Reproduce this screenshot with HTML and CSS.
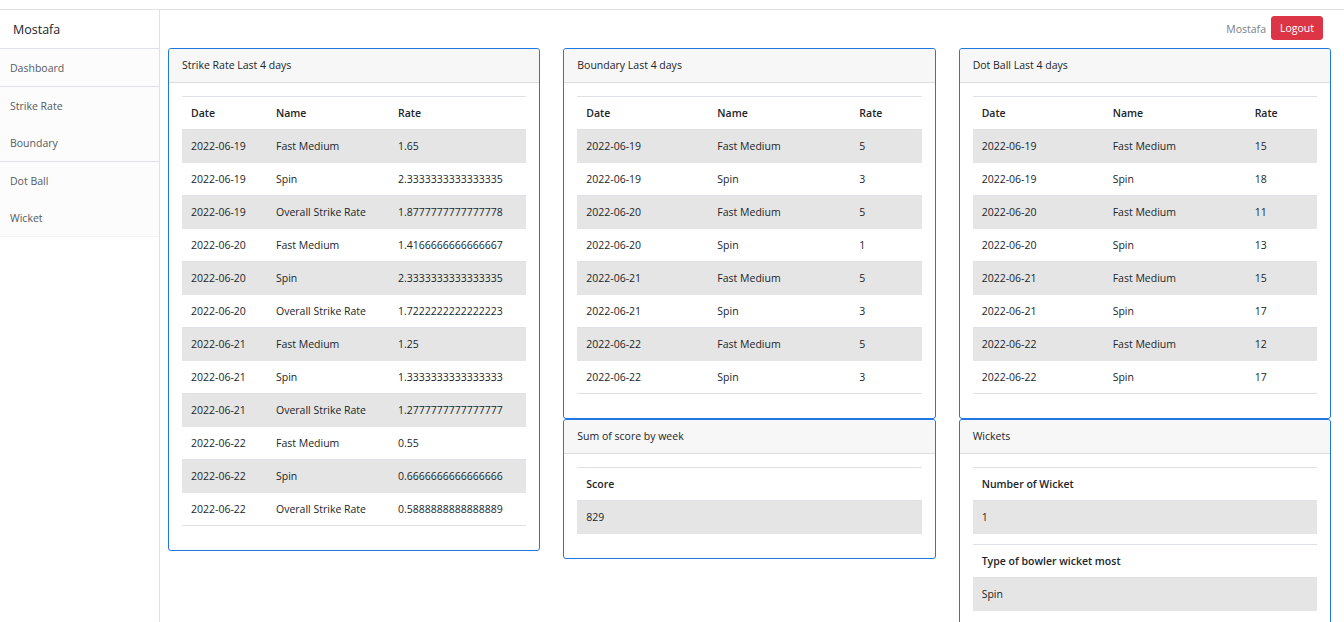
FILE: index.html
```html
<!DOCTYPE html>
<html>
<head>
<meta charset="utf-8">
<link rel="stylesheet" href="styles.css">
</head>
<body>
<div class="page">
  <aside class="sidebar">
    <div class="brand">Mostafa</div>
    <nav class="nav">
      <a class="nav-item sep">Dashboard</a>
      <a class="nav-item">Strike Rate</a>
      <a class="nav-item sep">Boundary</a>
      <a class="nav-item">Dot Ball</a>
      <a class="nav-item sep-faint">Wicket</a>
    </nav>
  </aside>
  <main class="main">
    <header class="topbar">
      <span class="user">Mostafa</span>
      <button class="logout">Logout</button>
    </header>
    <div class="grid">
      <div class="col">
        <section class="card">
          <div class="card-header">Strike Rate Last 4 days</div>
          <div class="card-body">
            <table class="table">
              <colgroup><col class="c1a"><col class="c1b"><col></colgroup>
              <thead><tr><th>Date</th><th>Name</th><th>Rate</th></tr></thead>
              <tbody>
                <tr><td>2022-06-19</td><td>Fast Medium</td><td>1.65</td></tr>
                <tr><td>2022-06-19</td><td>Spin</td><td>2.3333333333333335</td></tr>
                <tr><td>2022-06-19</td><td>Overall Strike Rate</td><td>1.8777777777777778</td></tr>
                <tr><td>2022-06-20</td><td>Fast Medium</td><td>1.4166666666666667</td></tr>
                <tr><td>2022-06-20</td><td>Spin</td><td>2.3333333333333335</td></tr>
                <tr><td>2022-06-20</td><td>Overall Strike Rate</td><td>1.7222222222222223</td></tr>
                <tr><td>2022-06-21</td><td>Fast Medium</td><td>1.25</td></tr>
                <tr><td>2022-06-21</td><td>Spin</td><td>1.3333333333333333</td></tr>
                <tr><td>2022-06-21</td><td>Overall Strike Rate</td><td>1.2777777777777777</td></tr>
                <tr><td>2022-06-22</td><td>Fast Medium</td><td>0.55</td></tr>
                <tr><td>2022-06-22</td><td>Spin</td><td>0.6666666666666666</td></tr>
                <tr><td>2022-06-22</td><td>Overall Strike Rate</td><td>0.5888888888888889</td></tr>
              </tbody>
            </table>
          </div>
        </section>
      </div>
      <div class="col">
        <section class="card">
          <div class="card-header">Boundary Last 4 days</div>
          <div class="card-body">
            <table class="table">
              <colgroup><col class="c2a"><col class="c2b"><col></colgroup>
              <thead><tr><th>Date</th><th>Name</th><th>Rate</th></tr></thead>
              <tbody>
                <tr><td>2022-06-19</td><td>Fast Medium</td><td>5</td></tr>
                <tr><td>2022-06-19</td><td>Spin</td><td>3</td></tr>
                <tr><td>2022-06-20</td><td>Fast Medium</td><td>5</td></tr>
                <tr><td>2022-06-20</td><td>Spin</td><td>1</td></tr>
                <tr><td>2022-06-21</td><td>Fast Medium</td><td>5</td></tr>
                <tr><td>2022-06-21</td><td>Spin</td><td>3</td></tr>
                <tr><td>2022-06-22</td><td>Fast Medium</td><td>5</td></tr>
                <tr><td>2022-06-22</td><td>Spin</td><td>3</td></tr>
              </tbody>
            </table>
          </div>
        </section>
        <section class="card">
          <div class="card-header">Sum of score by week</div>
          <div class="card-body">
            <table class="table">
              <thead><tr><th>Score</th></tr></thead>
              <tbody><tr><td>829</td></tr></tbody>
            </table>
          </div>
        </section>
      </div>
      <div class="col">
        <section class="card">
          <div class="card-header">Dot Ball Last 4 days</div>
          <div class="card-body">
            <table class="table">
              <colgroup><col class="c2a"><col class="c2b"><col></colgroup>
              <thead><tr><th>Date</th><th>Name</th><th>Rate</th></tr></thead>
              <tbody>
                <tr><td>2022-06-19</td><td>Fast Medium</td><td>15</td></tr>
                <tr><td>2022-06-19</td><td>Spin</td><td>18</td></tr>
                <tr><td>2022-06-20</td><td>Fast Medium</td><td>11</td></tr>
                <tr><td>2022-06-20</td><td>Spin</td><td>13</td></tr>
                <tr><td>2022-06-21</td><td>Fast Medium</td><td>15</td></tr>
                <tr><td>2022-06-21</td><td>Spin</td><td>17</td></tr>
                <tr><td>2022-06-22</td><td>Fast Medium</td><td>12</td></tr>
                <tr><td>2022-06-22</td><td>Spin</td><td>17</td></tr>
              </tbody>
            </table>
          </div>
        </section>
        <section class="card">
          <div class="card-header">Wickets</div>
          <div class="card-body">
            <table class="table">
              <thead><tr><th>Number of Wicket</th></tr></thead>
              <tbody><tr><td>1</td></tr></tbody>
            </table>
            <table class="table">
              <thead><tr><th>Type of bowler wicket most</th></tr></thead>
              <tbody><tr><td>Spin</td></tr></tbody>
            </table>
          </div>
        </section>
      </div>
    </div>
  </main>
</div>
</body>
</html>
```
FILE: styles.css
```css
* { box-sizing: border-box; }
html, body { margin: 0; padding: 0; background: #fff; }
body {
  font-family: "Open Sans", "Noto Sans", sans-serif;
  font-size: 10.5px;
  color: #212529;
}
.page {
  margin-top: 9px;
  border-top: 1px solid #dee2e6;
  display: flex;
  min-height: 613px;
}
.sidebar {
  width: 160px;
  flex: none;
  border-right: 1px solid #dee2e6;
}
.brand {
  height: 39px;
  padding: 1px 0 0 13px;
  font-size: 12.5px;
  line-height: 38px;
  color: #212529;
  border-bottom: 1px solid #dee2e6;
}
.nav { display: flex; flex-direction: column; background: #fcfcfc; }
.nav-item {
  height: 37.5px;
  line-height: 39px;
  padding-left: 10px;
  color: #555b61;
}
.nav-item.sep { border-bottom: 1px solid #dee2e6; }
.nav-item.sep-faint { border-bottom: 1px solid #f3f3f3; }
.main { flex: 1; min-width: 0; }
.topbar {
  height: 38px;
  display: flex;
  align-items: flex-start;
  justify-content: flex-end;
  gap: 5px;
  padding: 6px 21px 0 0;
}
.user { color: #7a8088; line-height: 26px; }
.logout {
  font-family: inherit;
  font-size: 10.5px;
  color: #fff;
  background: #dc3545;
  border: 1px solid #dc3545;
  border-radius: 3px;
  height: 24px;
  padding: 0 8px;
  line-height: 22px;
}
.grid {
  display: grid;
  grid-template-columns: 1fr 1fr 1fr;
  column-gap: 23px;
  padding: 0 13px 0 8px;
  align-items: start;
}
.col { display: flex; flex-direction: column; }
.card {
  border: 1px solid #1f78e0;
  border-radius: 3px;
  background: #fff;
}
.card-header {
  background: #f7f7f7;
  border-bottom: 1px solid #dcdcdc;
  padding: 0 13px;
  height: 34px;
  line-height: 33px;
  border-radius: 3px 3px 0 0;
}
.card-body { padding: 13px 13px 14px; }
.table {
  width: 100%;
  border-collapse: collapse;
  margin-bottom: 10px;
  border-top: 1px solid #dee2e6;
}
.table th, .table td {
  padding: 8px 9px;
  line-height: 16px;
  text-align: left;
  border-bottom: 1px solid #dee2e6;
  white-space: nowrap;
}
.table th { font-weight: 600; }
.table tbody tr:nth-child(odd) td { background: #e5e5e5; border-bottom-color: #e5e5e5; }
.c1a { width: 85px; }
.c1b { width: 122px; }
.c2a { width: 131px; }
.c2b { width: 142px; }
```
